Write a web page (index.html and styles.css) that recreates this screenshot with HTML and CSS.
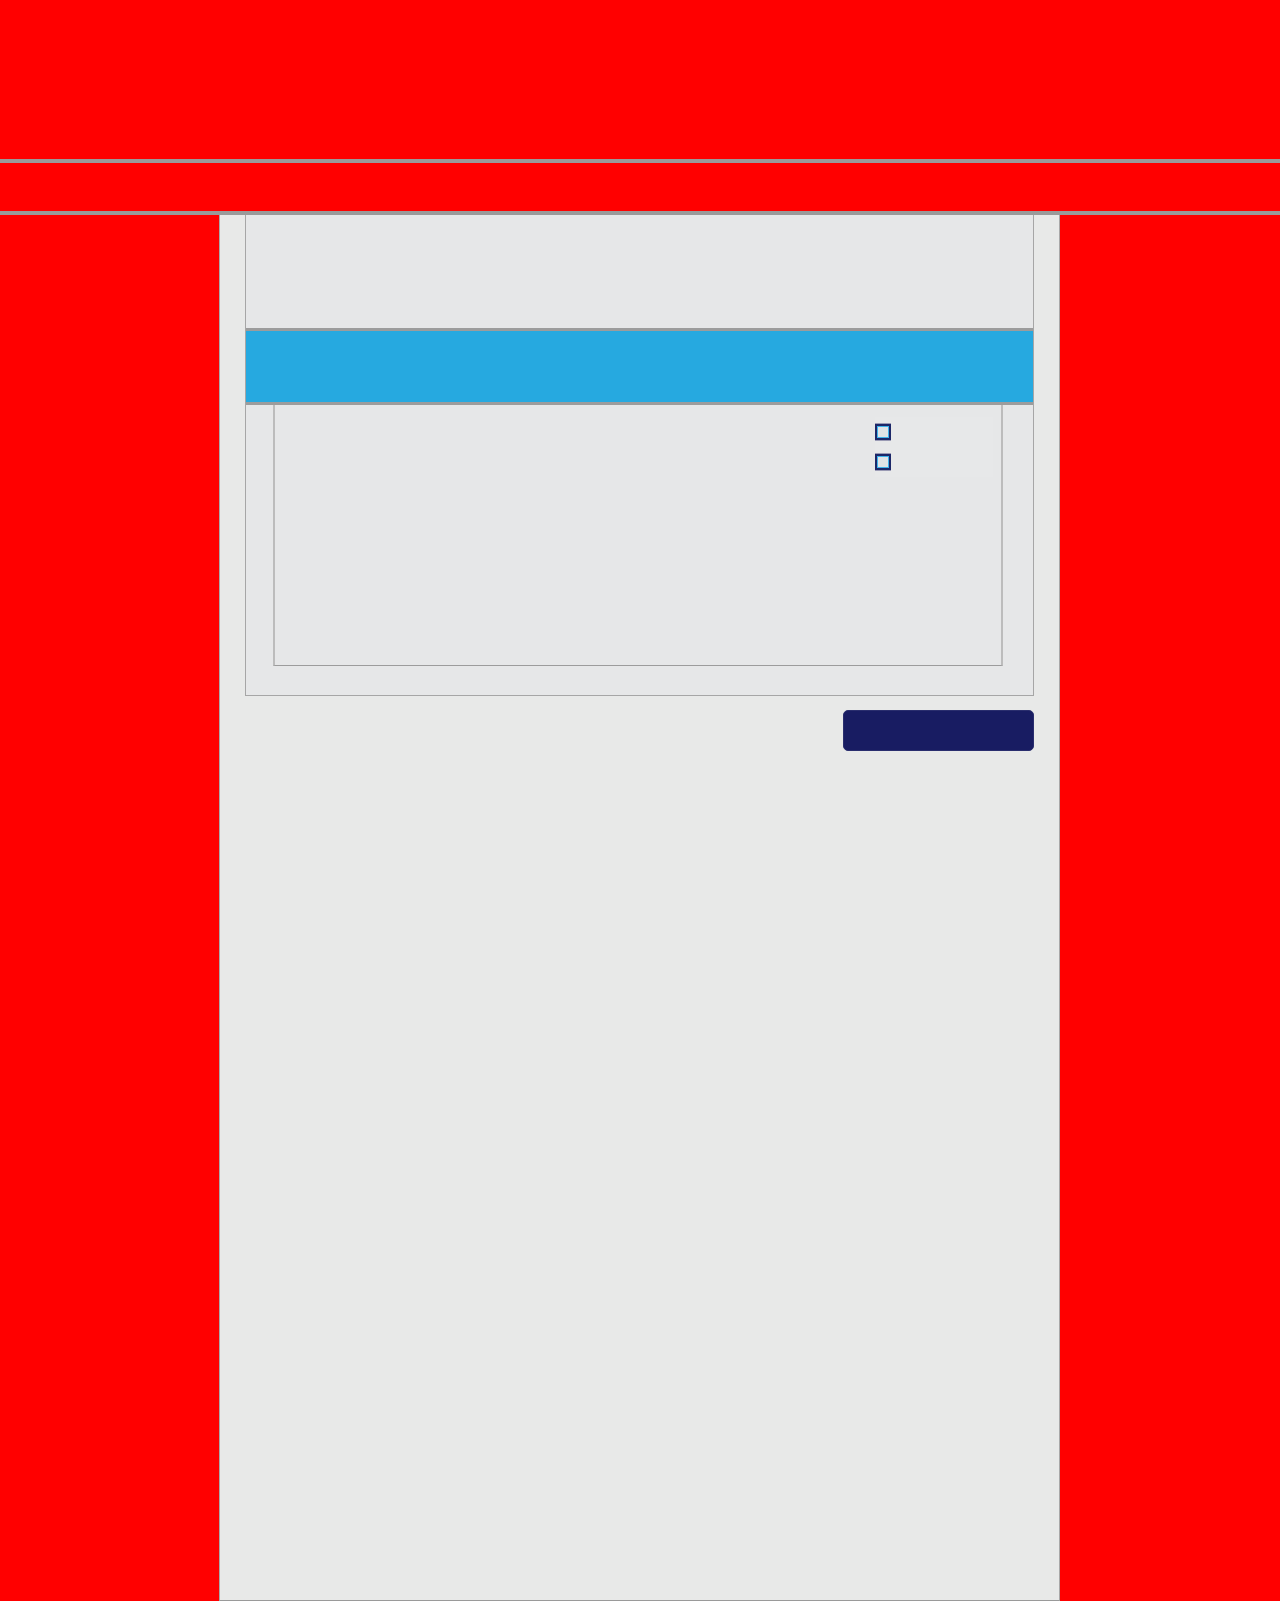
FILE: index.html
```html
<!DOCTYPE html>
<html lang="en">
<head>
<meta charset="utf-8">
<title>Page</title>
<link rel="stylesheet" href="styles.css">
</head>
<body>
<header class="masthead"></header>
<nav class="navbar"></nav>
<div class="layout">
  <div class="side"></div>
  <main class="panel">
    <section class="card">
      <div class="card-top"></div>
      <div class="card-strip"></div>
      <div class="card-body">
        <div class="inner">
          <ul class="options">
            <li class="option"><span class="check"></span></li>
            <li class="option"><span class="check"></span></li>
          </ul>
        </div>
      </div>
    </section>
    <div class="actions">
      <button class="btn" type="button"></button>
    </div>
  </main>
  <div class="side"></div>
</div>
</body>
</html>
```

FILE: styles.css
```css
* { box-sizing: border-box; }
html, body { margin: 0; padding: 0; }
body {
  background: #ff0000;
  font-family: "Liberation Sans", Arial, sans-serif;
  min-height: 1601px;
}
.masthead {
  height: 163px;
  background: #ff0000;
  border-bottom: 4px solid #9a9a9a;
}
.navbar {
  height: 52px;
  background: #ff0000;
  border-bottom: 4px solid #9a9a9a;
}
.layout {
  display: grid;
  grid-template-columns: 219px 841px 1fr;
  min-height: 1386px;
}
.panel {
  background: #e8e9e8;
  border-left: 1px solid #a8a8a8;
  border-right: 1px solid #a8a8a8;
  border-bottom: 1px solid #9a9a9a;
  padding: 0 25px;
  display: flex;
  flex-direction: column;
}
.card {
  background: #e6e7e8;
  border-left: 1px solid #a6a6a6;
  border-right: 1px solid #a6a6a6;
  border-bottom: 1px solid #a6a6a6;
}
.card-top { height: 113px; }
.card-strip {
  height: 77px;
  background: #26a9e0;
  border-top: 3px solid #9c9c9c;
  border-bottom: 3px solid #9c9c9c;
}
.card-body {
  padding: 0 30px 29px 27px;
}
.inner {
  height: 261px;
  border-left: 2px solid #bcbcbc;
  border-right: 2px solid #bcbcbc;
  border-bottom: 1px solid #9c9c9c;
  display: flex;
  justify-content: flex-end;
  padding: 12px 8px 0 0;
}
.options {
  list-style: none;
  margin: 0;
  padding: 0;
  width: 118px;
}
.option {
  height: 30px;
  display: flex;
  align-items: center;
  background: #e7e8e9;
}
.check {
  display: block;
  width: 16px;
  height: 16px;
  border: 2px solid #1c2768;
  box-shadow: inset 0 0 0 1px #3fb2ea, 0 -1px 0 #9a9ab4, 0 1px 0 #9a9ab4;
  background: #dfe4e7;
}
.actions {
  display: flex;
  justify-content: flex-end;
  padding-top: 14px;
}
.btn {
  width: 191px;
  height: 41px;
  background: #181c62;
  border: 1px solid #2a2e6e;
  border-radius: 5px;
  padding: 0;
  cursor: pointer;
}
```
